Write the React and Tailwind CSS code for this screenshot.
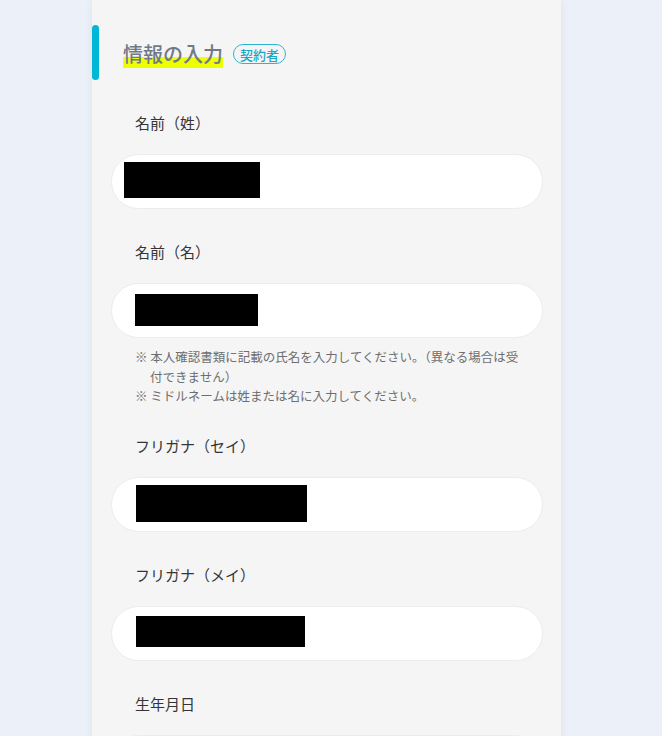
export default function App() {
  const fields = [
    { label: '名前（姓）', mask: 'ml-[12px] mt-[7px] w-[136px] h-[36px]' },
    { label: '名前（名）', mask: 'ml-[23px] mt-[10px] w-[123px] h-[32px]', notes: true },
    { label: 'フリガナ（セイ）', mask: 'ml-[24px] mt-[7px] w-[171px] h-[37px]' },
    { label: 'フリガナ（メイ）', mask: 'ml-[24px] mt-[9px] w-[169px] h-[31px]' },
  ];

  return (
    <div
      className="min-h-screen bg-[#ecf0f8] overflow-hidden"
      style={{ fontFamily: '"Noto Sans CJK JP", "Noto Sans", sans-serif' }}
    >
      <div className="ml-[92px] w-[469px] bg-[#f5f5f5] shadow-[0_0_8px_rgba(40,60,110,0.08)] pt-[25px] pb-10">
        {/* Section title */}
        <div className="flex items-center h-[55px]">
          <div className="w-[7px] h-[55px] rounded-full bg-[#00b7d6]" />
          <h2 className="ml-[24px] text-[20px] leading-[28px] font-medium text-[#6f7a86] mt-[3px]">
            <span className="bg-[linear-gradient(transparent_62%,#eeff00_62%)]">情報の入力</span>
          </h2>
          <span className="ml-[10px] mt-[3px] h-[20px] px-[6px] flex items-center rounded-full border border-[#2bb5d3] text-[#1ba7c7] text-[13px] font-medium leading-none">
            契約者
          </span>
        </div>

        <div className="pl-[19px] pr-[18px]">
          {fields.map((f, i) => (
            <div key={i} className={f.label === 'フリガナ（セイ）' ? 'mt-[28px]' : 'mt-[31px]'}>
              <div className="pl-[24px] text-[15px] leading-[24px] text-[#353535]">{f.label}</div>
              <div className="mt-[19px] h-[55px] rounded-full bg-white border border-[#ececec]">
                <div className={`bg-black ${f.mask}`} />
              </div>
              {f.notes && (
                <div className="mt-[9px] pl-[24px] pr-[20px] text-[12.5px] leading-[19.5px] text-[#6e6e6e]">
                  <p className="pl-[15px] -indent-[15px]">※ 本人確認書類に記載の氏名を入力してください。（異なる場合は受付できません）</p>
                  <p className="pl-[15px] -indent-[15px]">※ ミドルネームは姓または名に入力してください。</p>
                </div>
              )}
            </div>
          ))}

          <div className="mt-[31px]">
            <div className="pl-[24px] text-[15px] leading-[24px] text-[#353535]">生年月日</div>
            <div className="mt-[19px] h-[55px] rounded-full bg-white border border-[#ececec]" />
          </div>
        </div>
      </div>
    </div>
  );
}
